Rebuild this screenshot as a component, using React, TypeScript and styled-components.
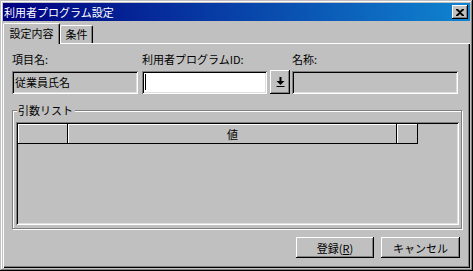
import React from "react";
import styled, { createGlobalStyle, css } from "styled-components";

const Global = createGlobalStyle`
  html, body { margin: 0; padding: 0; background: #c0c0c0; }
  body { font-family: "Noto Sans CJK JP", "Noto Sans", sans-serif; font-size: 11px; color: #000; }
`;

const raised = css`
  box-shadow: inset -1px -1px #000, inset 1px 1px #fff, inset -2px -2px #808080;
`;
const sunken = css`
  box-shadow: inset 1px 1px #808080, inset -1px -1px #fff, inset 2px 2px #000, inset -2px -2px #dfdfdf;
`;

const Window = styled.div`
  width: 473px;
  height: 271px;
  box-sizing: border-box;
  padding: 3px;
  background: #c0c0c0;
  box-shadow: inset -1px -1px #000, inset 1px 1px #c0c0c0, inset -2px -2px #808080, inset 2px 2px #fff;
  display: flex;
  flex-direction: column;
`;

const TitleBar = styled.div`
  height: 18px;
  flex: none;
  background: linear-gradient(to right, #000080, #1084d0);
  display: flex;
  align-items: center;
  justify-content: space-between;
  padding: 0 2px 0 1px;
`;

const Title = styled.span`
  color: #fff;
  font-size: 11px;
  line-height: 14px;
  white-space: nowrap;
`;

const CloseButton = styled.div`
  width: 16px;
  height: 14px;
  background: #c0c0c0;
  ${raised};
  display: flex;
  align-items: center;
  justify-content: center;
`;

const TabStrip = styled.div`
  height: 22px;
  flex: none;
  display: flex;
  align-items: flex-end;
  position: relative;
  z-index: 1;
`;

const Tab = styled.div<{ $active?: boolean }>`
  box-sizing: border-box;
  height: ${(p) => (p.$active ? 21 : 18)}px;
  margin-bottom: ${(p) => (p.$active ? -1 : 0)}px;
  padding: ${(p) => (p.$active ? "2px 0 0 0" : "1px 0 0 0")};
  width: ${(p) => (p.$active ? 57 : 33)}px;
  background: #c0c0c0;
  border-top: 1px solid #fff;
  border-left: 1px solid #fff;
  border-right: 1px solid #000;
  border-radius: 2px 2px 0 0;
  box-shadow: inset -1px 0 #808080;
  display: flex;
  justify-content: center;
  align-items: flex-start;
  font-size: 11px;
  line-height: 14px;
  white-space: nowrap;
`;

const Panel = styled.div`
  flex: 1;
  box-sizing: border-box;
  padding: 0 8px 0 9px;
  background: #c0c0c0;
  box-shadow: inset 1px 1px #fff, inset -1px -1px #000, inset -2px -2px #808080;
  display: flex;
  flex-direction: column;
`;

const FieldGrid = styled.div`
  margin-top: 9px;
  display: grid;
  grid-template-columns: 130px 128px 22px 166px;
  grid-template-rows: 14px 23px;
  row-gap: 5px;
`;

const Label = styled.div<{ $span?: number }>`
  grid-column: span ${(p) => p.$span ?? 1};
  font-size: 11px;
  line-height: 14px;
  white-space: nowrap;
`;

const Field = styled.div<{ $w: number; $white?: boolean }>`
  box-sizing: border-box;
  width: ${(p) => p.$w}px;
  height: 23px;
  background: ${(p) => (p.$white ? "#fff" : "#c0c0c0")};
  ${sunken};
  padding: 3px 4px 0 3px;
  font-size: 11px;
  line-height: 17px;
  white-space: nowrap;
  display: flex;
  align-items: flex-start;
`;

const Caret = styled.span`
  display: inline-block;
  width: 1px;
  height: 16px;
  margin-top: 0px;
  margin-left: 0px;
  background: #000;
`;

const IconButton = styled.div`
  box-sizing: border-box;
  width: 20px;
  height: 24px;
  margin-top: -1px;
  background: #c0c0c0;
  ${raised};
  display: flex;
  align-items: center;
  justify-content: center;
`;

const Group = styled.div`
  position: relative;
  margin-top: 16px;
  box-sizing: border-box;
  width: 450px;
  height: 119px;
  border: 1px solid #808080;
  box-shadow: 1px 1px 0 #fff, inset 1px 1px 0 #fff;
  padding: 11px 2px 2px 3px;
`;

const Legend = styled.span`
  position: absolute;
  top: -8px;
  left: 4px;
  padding: 0 2px 0 1px;
  background: #c0c0c0;
  font-size: 11px;
  line-height: 14px;
  white-space: nowrap;
`;

const List = styled.div`
  box-sizing: border-box;
  width: 443px;
  height: 103px;
  padding: 2px;
  background: #c0c0c0;
  ${sunken};
`;

const HeaderRow = styled.div`
  display: flex;
  height: 20px;
`;

const HeaderCell = styled.div<{ $w: number }>`
  box-sizing: border-box;
  width: ${(p) => p.$w}px;
  height: 20px;
  background: #c0c0c0;
  box-shadow: inset -1px -1px #000, inset 1px 1px #fff;
  display: flex;
  align-items: center;
  justify-content: center;
  font-size: 11px;
  line-height: 14px;
`;

const ButtonRow = styled.div`
  margin-top: 8px;
  padding-right: 2px;
  display: flex;
  justify-content: flex-end;
  gap: 7px;
`;

const Button = styled.div<{ $w: number }>`
  box-sizing: border-box;
  width: ${(p) => p.$w}px;
  height: 21px;
  background: #c0c0c0;
  ${raised};
  display: flex;
  align-items: center;
  justify-content: center;
  font-size: 11px;
  line-height: 14px;
  white-space: nowrap;
`;

const Mnemonic = styled.span`
  text-decoration: underline;
`;

export default function App() {
  return (
    <>
      <Global />
      <Window>
        <TitleBar>
          <Title>利用者プログラム設定</Title>
          <CloseButton>
            <svg width="8" height="7" viewBox="0 0 8 7">
              <path d="M0 0h2l2 2 2-2h2v1L5 3.5 8 6v1H6L4 5 2 7H0V6l3-2.5L0 1z" fill="#000" />
            </svg>
          </CloseButton>
        </TitleBar>
        <TabStrip>
          <Tab $active>設定内容</Tab>
          <Tab>条件</Tab>
        </TabStrip>
        <Panel>
          <FieldGrid>
            <Label>項目名:</Label>
            <Label $span={2}>利用者プログラムID:</Label>
            <Label>名称:</Label>
            <Field $w={126}>従業員氏名</Field>
            <Field $w={125} $white>
              <Caret />
            </Field>
            <IconButton>
              <svg width="9" height="10" viewBox="0 0 9 10">
                <rect x="3.5" y="0" width="2" height="4" fill="#000" />
                <path d="M0.5 4h8L4.5 8z" fill="#000" />
                <rect x="0.5" y="9" width="8" height="1" fill="#000" />
              </svg>
            </IconButton>
            <Field $w={166} />
          </FieldGrid>
          <Group>
            <Legend>引数リスト</Legend>
            <List>
              <HeaderRow>
                <HeaderCell $w={50} />
                <HeaderCell $w={329}>値</HeaderCell>
                <HeaderCell $w={21} />
              </HeaderRow>
            </List>
          </Group>
          <ButtonRow>
            <Button $w={78}>
              登録(<Mnemonic>R</Mnemonic>)
            </Button>
            <Button $w={79}>キャンセル</Button>
          </ButtonRow>
        </Panel>
      </Window>
    </>
  );
}
